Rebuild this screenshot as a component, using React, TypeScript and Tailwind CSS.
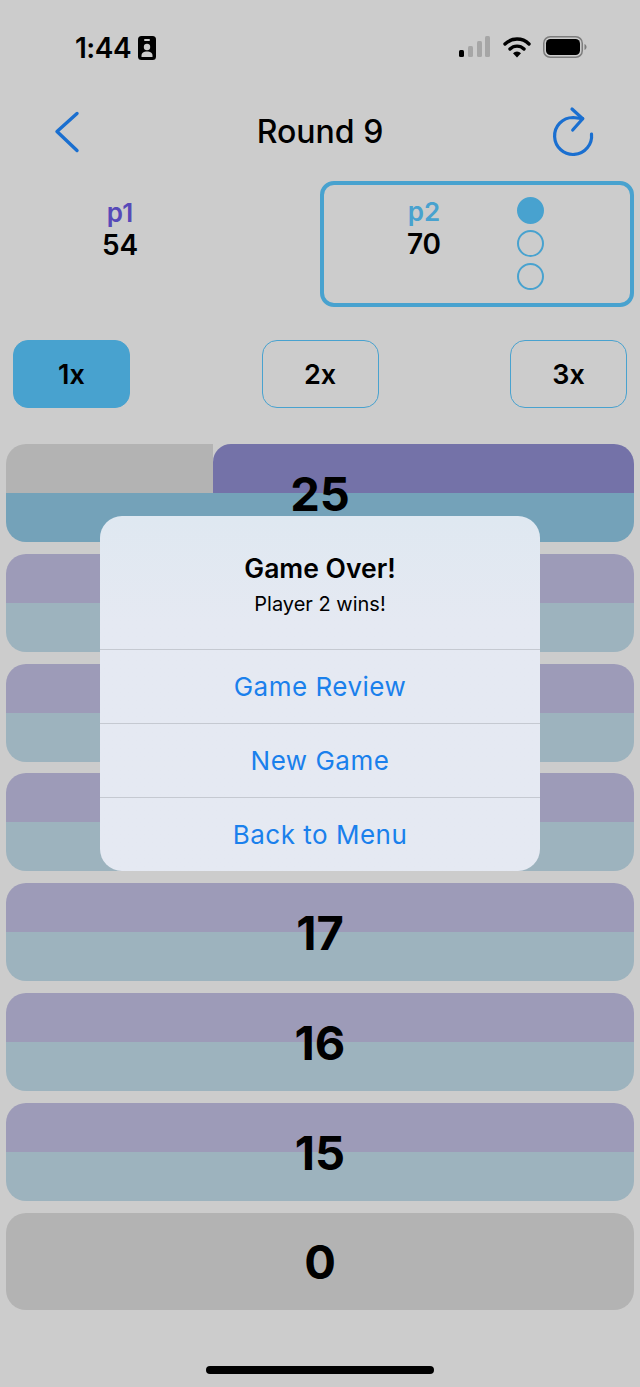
import React from "react";

const font = { fontFamily: "Inter, 'Liberation Sans', sans-serif" };

// numbers of the rows behind the alert are covered, so those rows carry none
const rows: (number | null)[] = [null, null, null, 17, 16, 15];

function Row({ value }: { value: number | null }) {
  return (
    <div className="relative h-[98px] w-full overflow-hidden rounded-[20px]">
      <div className="h-[49px] bg-[#9d9bb8]" />
      <div className="h-[49px] bg-[#9db3be]" />
      {value !== null && (
        <div className="absolute inset-0 flex items-center justify-center pt-[3px] text-[47px] font-bold text-black">
          {value}
        </div>
      )}
    </div>
  );
}

function Multiplier({ label, active }: { label: string; active?: boolean }) {
  return (
    <div
      className={`flex h-[68px] w-[117px] items-center justify-center rounded-[15px] border-[1.5px] border-[#48a2cf] pt-[2px] text-[27px] font-semibold text-black ${
        active ? "bg-[#48a2cf]" : ""
      }`}
    >
      {label}
    </div>
  );
}

function Dart({ filled }: { filled?: boolean }) {
  return (
    <div
      className={`h-[27px] w-[27px] rounded-full border-2 border-[#48a2cf] ${filled ? "bg-[#48a2cf]" : ""}`}
    />
  );
}

export default function App() {
  return (
    <div className="relative h-[1387px] w-[640px] overflow-hidden bg-[#cccccc]" style={font}>
      {/* Status bar */}
      <div className="flex h-[96px] items-start justify-between pl-[75px] pr-[53px] pt-[33px]">
        <div className="flex items-center gap-[7px]">
          <span className="text-[28px] leading-[30px] font-semibold tracking-[-0.5px] text-black">1:44</span>
          <svg width="18" height="24" viewBox="0 0 18 24">
            <rect x="0" y="0" width="18" height="24" rx="3.5" fill="#000" />
            <rect x="6" y="3" width="6" height="2" rx="1" fill="#ccc" />
            <circle cx="9" cy="11" r="3.2" fill="#ccc" />
            <path d="M3.5 21v-1.5C3.5 17 6 15.6 9 15.6s5.5 1.4 5.5 3.9V21z" fill="#ccc" />
          </svg>
        </div>
        <div className="flex items-center gap-[12px] pt-[3px]">
          <svg width="32" height="22" viewBox="0 0 32 22">
            <rect x="0" y="14" width="5" height="7" rx="1.5" fill="#000" />
            <rect x="9" y="10" width="5" height="11" rx="1.5" fill="#a6a6a6" />
            <rect x="18" y="5" width="5" height="16" rx="1.5" fill="#a6a6a6" />
            <rect x="26" y="0" width="5" height="21" rx="1.5" fill="#a6a6a6" />
          </svg>
          <svg width="28" height="22" viewBox="0 0 28 22">
            <path d="M2 8a17 17 0 0 1 24 0" fill="none" stroke="#000" strokeWidth="3.4" strokeLinecap="round" />
            <path d="M7 13a10 10 0 0 1 14 0" fill="none" stroke="#000" strokeWidth="3.4" strokeLinecap="round" />
            <path d="M10 17.2 14 21.5l4-4.3a5.6 5.6 0 0 0-8 0z" fill="#000" />
          </svg>
          <svg width="44" height="22" viewBox="0 0 44 22">
            <rect x="0.75" y="0.75" width="38.5" height="20.5" rx="6.5" fill="none" stroke="#7d7d7d" strokeWidth="1.5" />
            <rect x="3" y="3" width="34" height="16" rx="4.5" fill="#000" />
            <path d="M41.5 8v6c1.3-.5 2-1.7 2-3s-.7-2.5-2-3z" fill="#7d7d7d" />
          </svg>
        </div>
      </div>

      {/* Nav */}
      <div className="grid h-[72px] grid-cols-[1fr_auto_1fr] items-center px-[54px]">
        <svg width="26" height="42" viewBox="0 0 26 42" fill="none" stroke="#1a6fd0" strokeWidth="3.4" strokeLinecap="round" strokeLinejoin="round">
          <path d="M23 2.5 3 20.5 23 39.5" />
        </svg>
        <span className="text-[32px] font-medium text-black">Round 9</span>
        <svg className="mr-[-10px] justify-self-end" width="46" height="52" viewBox="0 0 46 52" fill="none" stroke="#1a6fd0" strokeWidth="3.2" strokeLinecap="round" strokeLinejoin="round">
          <path d="M41.5 28A18.5 18.5 0 1 1 23 11.5L32.7 12.7" />
          <path d="M22 3 32.7 12.7 22.7 24" />
        </svg>
      </div>

      {/* Players */}
      <div className="mt-[13px] flex h-[126px] px-[6px]">
        <div className="w-[314px] pl-[97px] pt-[17px]">
          <div className="flex w-[34px] flex-col items-center">
            <span className="text-[26px] leading-[30px] font-semibold text-[#5749b8]">p1</span>
            <span className="text-[28px] leading-[34px] font-semibold text-black">54</span>
          </div>
        </div>
        <div className="flex w-[314px] rounded-[14px] border-4 border-[#48a2cf] pl-[78px] pr-[10px]">
          <div className="flex w-[44px] flex-col items-center pt-[12px]">
            <span className="text-[26px] leading-[30px] font-semibold text-[#48a2cf]">p2</span>
            <span className="text-[28px] leading-[34px] font-semibold text-black">70</span>
          </div>
          <div className="ml-[71px] flex flex-col gap-[6px] pt-[12px]">
            <Dart filled />
            <Dart />
            <Dart />
          </div>
        </div>
      </div>

      {/* Multiplier buttons */}
      <div className="mt-[33px] flex justify-between px-[13px]">
        <Multiplier label="1x" active />
        <Multiplier label="2x" />
        <Multiplier label="3x" />
      </div>

      {/* Score rows */}
      <div className="mt-[36px] flex flex-col gap-[11.8px] px-[6px]">
        <div className="relative h-[98px] w-full overflow-hidden rounded-[20px]">
          <div className="flex h-[49px]">
            <div className="w-[207px] bg-[#b3b3b3]" />
            <div className="flex-1 rounded-tl-[18px] bg-[#7472a8]" />
          </div>
          <div className="h-[49px] bg-[#74a2b9]" />
          <div className="absolute inset-0 flex items-center justify-center pt-[3px] text-[47px] font-bold text-black">
            25
          </div>
        </div>
        {rows.map((v, i) => (
          <Row key={i} value={v} />
        ))}
        <div className="flex h-[97px] items-center justify-center rounded-[20px] bg-[#b3b3b3] pt-[3px] text-[47px] font-bold text-black">
          0
        </div>
      </div>

      {/* Home indicator */}
      <div className="absolute bottom-[13px] left-[206px] h-[8px] w-[228px] rounded-full bg-black" />

      {/* Alert */}
      <div className="absolute left-[100px] top-[516px] w-[440px] overflow-hidden rounded-[22px] bg-gradient-to-b from-[#dfe8f1] to-[#e5e9f2] to-30%">
        <div className="flex h-[133px] flex-col items-center pt-[35px]">
          <span className="text-[26.5px] leading-[34px] font-semibold text-black">Game Over!</span>
          <span className="mt-[4px] text-[20px] leading-[30px] text-black">Player 2 wins!</span>
        </div>
        {["Game Review", "New Game", "Back to Menu"].map((t) => (
          <div
            key={t}
            className="flex h-[74px] items-center justify-center border-t border-[#c5c9d1] text-[26px] tracking-[0.5px] text-[#1a80ec]"
          >
            {t}
          </div>
        ))}
      </div>
    </div>
  );
}
